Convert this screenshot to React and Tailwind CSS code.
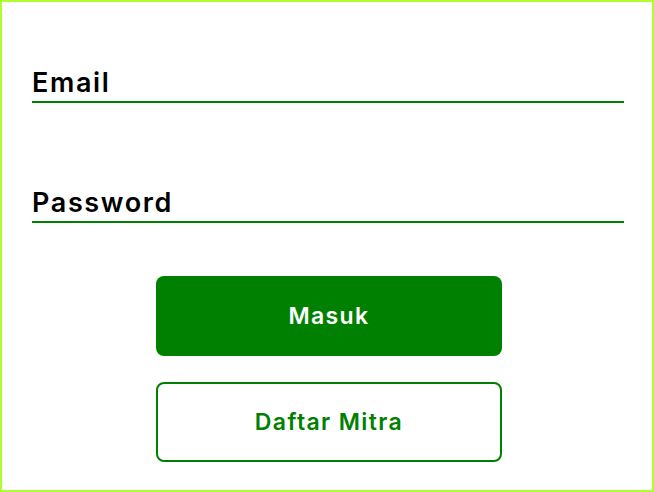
export default function App() {
  const font = { fontFamily: 'Inter, "Noto Sans", sans-serif' };
  return (
    <div className="w-[654px] h-[492px] border-2 border-[#adff2f] bg-white box-border" style={font}>
      <div className="pl-[30px] pr-[28px] pt-[62px] flex flex-col">
        <div className="flex flex-col">
          <label className="text-[27px] font-semibold text-black leading-[37px] tracking-[0.06em]">Email</label>
          <div className="h-[2px] bg-[#008000]" />
        </div>
        <div className="flex flex-col mt-[81px]">
          <label className="text-[27px] font-semibold text-black leading-[37px] tracking-[0.06em]">Password</label>
          <div className="h-[2px] bg-[#008000]" />
        </div>
      </div>
      <div className="flex flex-col items-center pl-[4px] mt-[53px] gap-[26px]">
        <button className="w-[346px] h-[80px] rounded-lg bg-[#008000] text-white text-[23px] font-semibold tracking-[0.06em]">Masuk</button>
        <button className="w-[346px] h-[80px] rounded-lg border-2 border-[#008000] text-[#008000] text-[23px] font-semibold tracking-[0.06em]">Daftar Mitra</button>
      </div>
    </div>
  );
}
